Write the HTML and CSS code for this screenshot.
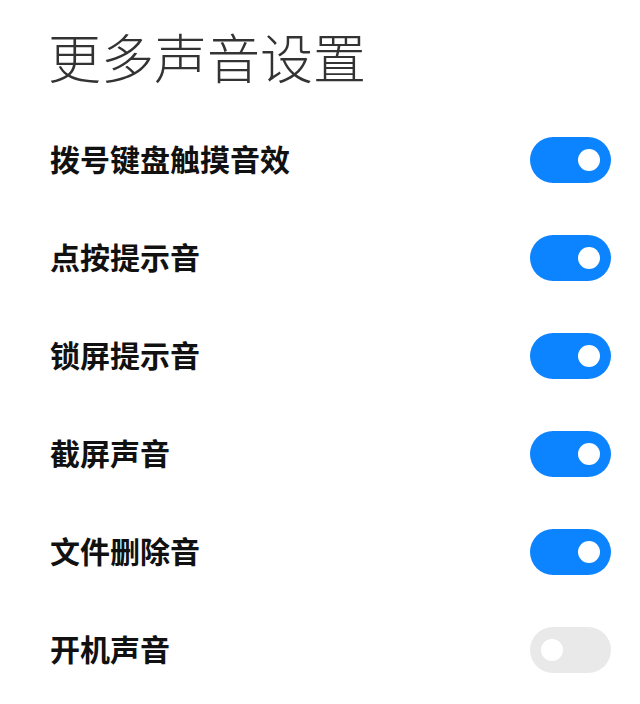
FILE: index.html
```html
<!DOCTYPE html>
<html>
  <head>
    <meta charset="utf-8">
    <title>更多声音设置</title>
    <link rel="stylesheet" href="styles.css">
  </head>
  <body>
    <div class="page">
      <h1 class="title">更多声音设置</h1>
      <div class="row">
        <span class="label">拨号键盘触摸音效</span>
        <span class="switch on"><span class="knob"></span></span>
      </div>
      <div class="row">
        <span class="label">点按提示音</span>
        <span class="switch on"><span class="knob"></span></span>
      </div>
      <div class="row">
        <span class="label">锁屏提示音</span>
        <span class="switch on"><span class="knob"></span></span>
      </div>
      <div class="row">
        <span class="label">截屏声音</span>
        <span class="switch on"><span class="knob"></span></span>
      </div>
      <div class="row">
        <span class="label">文件删除音</span>
        <span class="switch on"><span class="knob"></span></span>
      </div>
      <div class="row">
        <span class="label">开机声音</span>
        <span class="switch"><span class="knob"></span></span>
      </div>
    </div>
  </body>
</html>
```

FILE: styles.css
```css
body {
  margin:0;
  background:#fff;
  font-family:"Noto Sans CJK SC", "Noto Sans", sans-serif;
}
.page {
  padding:0 29px 0 48px;
}
.title {
  margin:0;
  height:111px;
  line-height:112px;
  font-size:53px;
  font-weight:300;
  color:#333;
}
.row {
  height:98px;
  display:flex;
  align-items:center;
  justify-content:space-between;
}
.label {
  font-size:30px;
  font-weight:600;
  color:#111;
  padding:0 0 4px 2px;
}
.switch {
  width:81px;
  height:46px;
  border-radius:23px;
  background:#e9e9e9;
  display:flex;
  align-items:center;
  padding:0 11px;
  box-sizing:border-box;
}
.switch.on {
  background:#0d84ff;
  justify-content:flex-end;
}
.knob {
  width:22px;
  height:22px;
  border-radius:50%;
  background:#fff;
}
```
